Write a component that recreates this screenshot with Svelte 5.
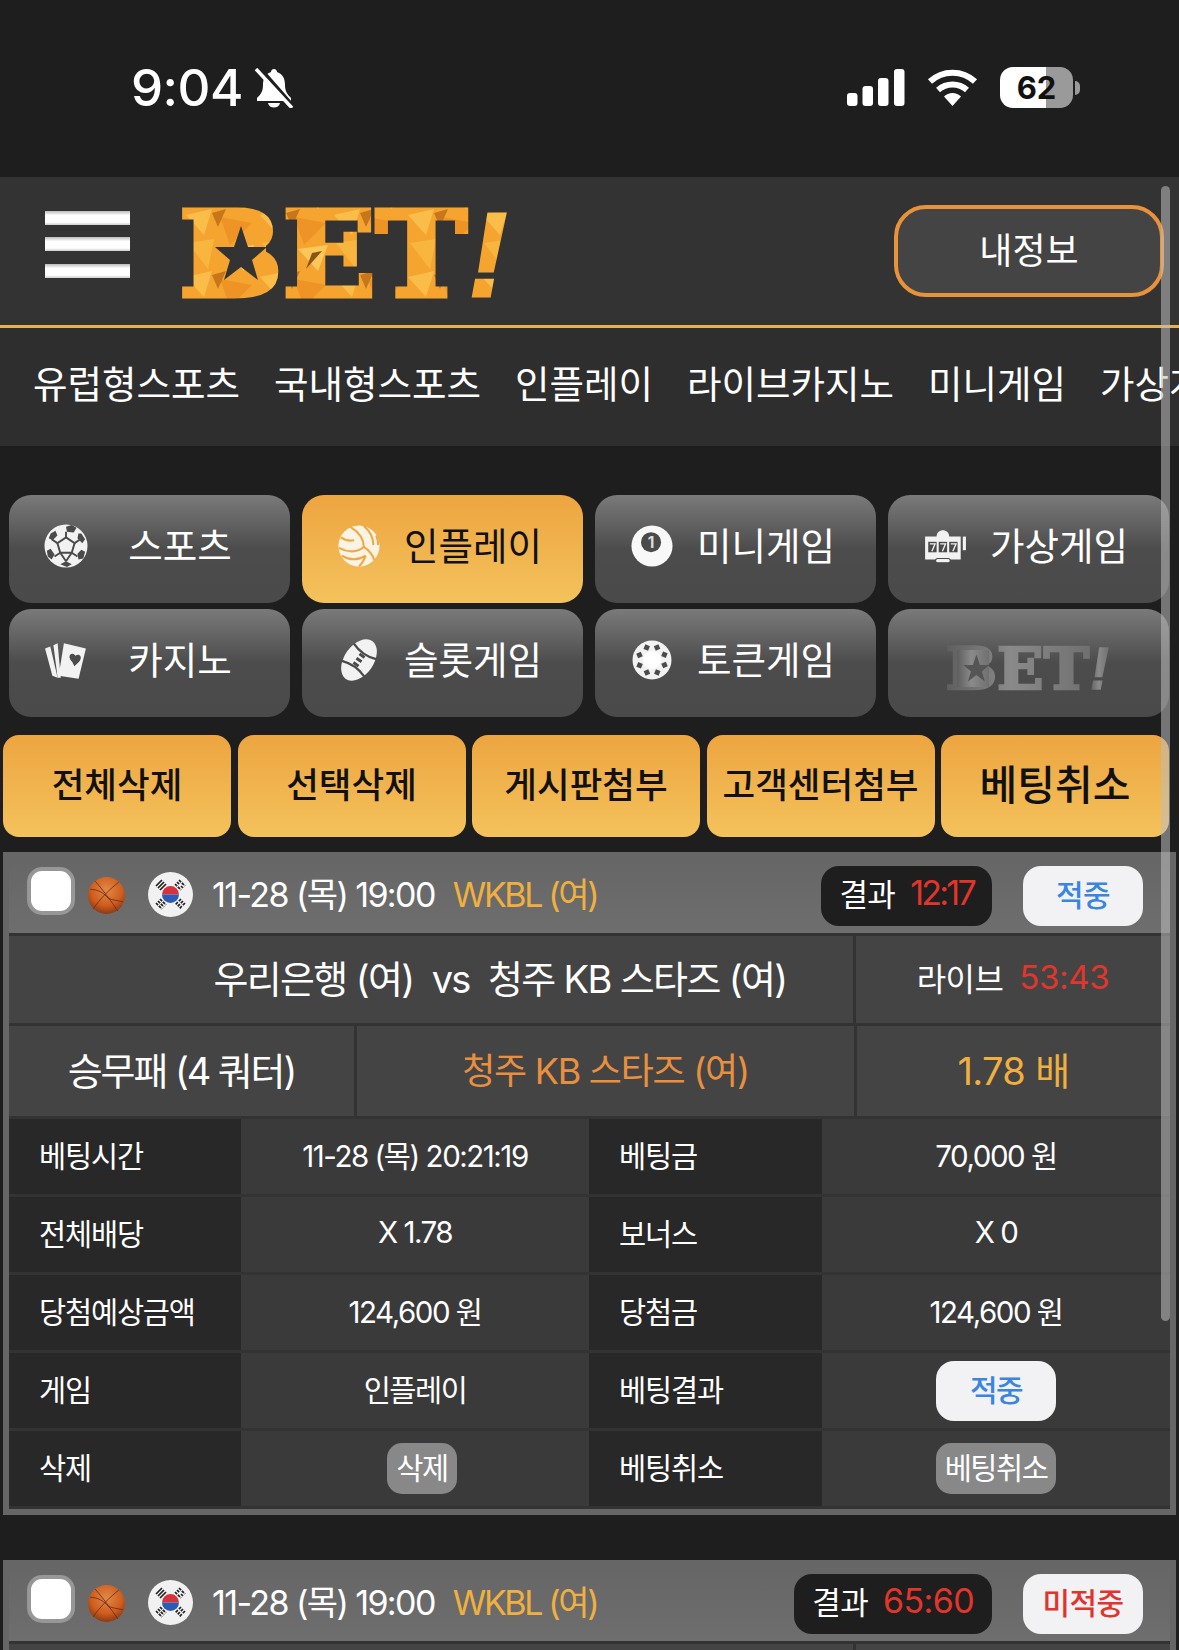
<script lang="ts">
  const navItems = ["유럽형스포츠", "국내형스포츠", "인플레이", "라이브카지노", "미니게임", "가상게임"];
  const cats = [
    { name: "스포츠", icon: "soccer" },
    { name: "인플레이", icon: "volley", active: true },
    { name: "미니게임", icon: "ball" },
    { name: "가상게임", icon: "slot" },
    { name: "카지노", icon: "cards" },
    { name: "슬롯게임", icon: "football" },
    { name: "토큰게임", icon: "chip" },
  ];
  const actions = ["전체삭제", "선택삭제", "게시판첨부", "고객센터첨부", "베팅취소"];
  const details = [
    { a: "베팅시간", b: "11-28 (목) 20:21:19", c: "베팅금", d: "70,000 원" },
    { a: "전체배당", b: "X 1.78", c: "보너스", d: "X 0" },
    { a: "당첨예상금액", b: "124,600 원", c: "당첨금", d: "124,600 원" },
    { a: "게임", b: "인플레이", c: "베팅결과", d: "적중", dKind: "hit" },
    { a: "삭제", b: "삭제", bKind: "del", c: "베팅취소", d: "베팅취소", dKind: "gray" },
  ];
  const cards = [
    { score: "12:17", status: "적중", miss: false, full: true },
    { score: "65:60", status: "미적중", miss: true, full: false },
  ];
</script>

{#snippet logo(fill, star)}
  <text x="-3" y="87" textLength="288" lengthAdjust="spacingAndGlyphs" class="logo-text" fill={fill} stroke={fill}>BET</text>
  <rect x="20" y="8" width="64" height="74" fill={fill} />
  <polygon points="59,17 66,38 85,38 70,51 76,71 59,58 42,71 48,51 33,38 52,38" fill={star} />
  <text x="287" y="87" class="logo-mark" textLength="38" lengthAdjust="spacingAndGlyphs" fill={fill} stroke={fill}>!</text>
{/snippet}

{#snippet flag()}
  <svg class="flag" viewBox="0 0 45 45">
    <circle cx="22.5" cy="22.5" r="22.5" fill="#f1f1f1" />
    <path d="M14 22.5a8.5 8.5 0 0 1 17 0z" fill="#d6333f" />
    <path d="M14 22.5a8.5 8.5 0 0 0 17 0z" fill="#2b5bb5" />
    <g stroke="#222" stroke-width="1.7">
      <path d="M8 14l6-6M10 16l6-6M12 18l6-6" />
      <path d="M31 8l6 6M29 10l2.500 2.500M33 14l2 2M27 12l6 6" stroke-dasharray="3 1" />
      <path d="M8 31l6 6M10 29l6 6M12 27l6 6" stroke-dasharray="3 1" />
      <path d="M37 31l-6 6M35 29l-6 6M33 27l-6 6" stroke-dasharray="3 1.500" />
    </g>
  </svg>
{/snippet}

{#snippet icon(name)}
  {#if name === "soccer"}
    <svg class="ico" viewBox="0 0 46 46">
      <circle cx="23" cy="23" r="22.500" fill="#f2f2f2" />
      <g fill="#4a4a4a">
        <polygon points="23,3 29,1 34,4 31,9 24,8" />
        <polygon points="7,10 12,7 14,12 9,17 5,15" />
        <polygon points="39,10 43,16 40,20 35,15 36,10" />
        <polygon points="3,28 7,26 11,32 8,37 4,34" />
        <polygon points="43,29 41,36 36,37 35,31 39,27" />
        <polygon points="17,42 23,39 29,42 24,45" />
      </g>
      <g fill="none" stroke="#4a4a4a" stroke-width="2">
        <polygon points="23,14 32,20 29,30 17,30 14,20" />
        <path d="M23 14V8M32 20l6-4M29 30l6 4M17 30l-6 4M14 20l-6-4M17 30l6 9M29 30l-6 9" />
      </g>
    </svg>
  {:else if name === "volley"}
    <svg class="ico" viewBox="0 0 44 46">
      <circle cx="22" cy="23" r="21.500" fill="#fbf3e4" />
      <g fill="none" stroke="#efa944" stroke-width="2.200">
        <path d="M13 3c8 5 14 12 14 21M27 2c6 5 10 12 10 20M40 12c2 4 2 7 2 10" />
        <path d="M27 24C20 30 10 30 1 25M29 33c-8 5-17 5-25 0M22 44c3-2 5-6 7-11" />
        <path d="M27 24c5 3 10 9 11 14M3 14c4 3 9 4 14 3" />
      </g>
    </svg>
  {:else if name === "ball"}
    <svg class="ico" viewBox="0 0 44 46">
      <circle cx="22" cy="23" r="21.500" fill="#f8f8f8" />
      <circle cx="21" cy="19" r="10.500" fill="#4a4a4a" />
      <text x="21" y="25" text-anchor="middle" class="ball-num">1</text>
    </svg>
  {:else if name === "slot"}
    <svg class="ico slot" viewBox="0 0 42 34">
      <path d="M2 8h34v22H2zM13 8c0-8 12-8 12 0z" fill="#f2f2f2" />
      <rect x="12" y="29" width="14" height="4" rx="2" fill="#f2f2f2" stroke="#4a4a4a" />
      <path d="M38 8h3v13h-3z" fill="#f2f2f2" />
      <g fill="#4a4a4a">
        <rect x="5" y="13" width="8" height="10" />
        <rect x="15" y="13" width="8" height="10" />
        <rect x="25" y="13" width="8" height="10" />
      </g>
      <path d="M6.500 15h5l-3 7M16.500 15h5l-3 7M26.500 15h5l-3 7" fill="none" stroke="#f2f2f2" stroke-width="1.300" />
    </svg>
  {:else if name === "cards"}
    <svg class="ico" viewBox="0 0 42 38">
      <path d="M1 8l5-2 7 30-5-2z" fill="#f2f2f2" />
      <path d="M9 5l4-2 3 33-3 0z" fill="#f2f2f2" />
      <path d="M19 3l21 5-7 29-19-3z" fill="#f2f2f2" />
      <path d="M27 21c-4-4-3-8 0-8 2 0 2 1 3 2 1-1 2-1 3-1 3 1 3 5-1 8l-3 3z" fill="#4a4a4a" />
    </svg>
  {:else if name === "football"}
    <svg class="ico" viewBox="0 0 40 42">
      <g transform="rotate(35 20 21)">
        <ellipse cx="20" cy="21" rx="14" ry="22" fill="#f2f2f2" />
        <path d="M7 11c8 3 18 3 26 0M7 31c8-3 18-3 26 0" fill="none" stroke="#4a4a4a" stroke-width="2.200" />
        <path d="M17 16h6M17 21h6M17 26h6" stroke="#4a4a4a" stroke-width="2.800" />
      </g>
    </svg>
  {:else if name === "chip"}
    <svg class="ico chip" viewBox="0 0 40 40">
      <circle cx="20" cy="20" r="19.500" fill="#f2f2f2" />
      <g fill="#4a4a4a">
        {#each [0, 45, 90, 135, 180, 225, 270, 315] as a (a)}
          <path d="M20 3l3.500 3.500L20 10l-3.500-3.500z" transform="rotate({a + 22} 20 20)" />
        {/each}
      </g>
      <circle cx="20" cy="20" r="9" fill="#fff" />
    </svg>
  {/if}
{/snippet}

<svg width="0" height="0" class="defs">
  <defs>
    <pattern id="leaf" width="74" height="62" patternUnits="userSpaceOnUse">
      <rect width="74" height="62" fill="#f5a52f" />
      <polygon points="4,6 30,0 22,26" fill="#fbbd4a" />
      <polygon points="38,8 70,14 48,36" fill="#ee9326" />
      <polygon points="6,34 32,30 26,60" fill="#f9b63e" />
      <polygon points="42,40 72,36 62,62" fill="#fcc75a" />
      <polygon points="30,4 44,0 36,18" fill="#c7761a" />
      <polygon points="56,44 66,42 50,60" fill="#8a5416" />
    </pattern>
    <linearGradient id="grey" x1="0" x2="1" y1="0" y2="0">
      <stop offset="0" stop-color="#5e5e5e" />
      <stop offset="0.45" stop-color="#8a8a8a" />
      <stop offset="1" stop-color="#707070" />
    </linearGradient>
  </defs>
</svg>

<div class="page">
  <div class="status">
    <div class="status-left">
      <span class="time">9:04</span>
      <svg class="bell" viewBox="0 0 40 40">
        <path d="M20 1c-2 0-3 1.500-3 3C11 6 9 11 9 17c0 6-2 9-6 13v3h34v-3c-4-4-6-7-6-13 0-6-2-11-8-13 0-1.500-1-3-3-3zM14 35c1 6 11 6 12 0z" fill="#fff" />
        <path d="M5 0l34 39" stroke="#1e1e1e" stroke-width="5" />
        <path d="M2 1l36 39" stroke="#fff" stroke-width="3.500" />
      </svg>
    </div>
    <div class="status-right">
      <svg class="signal" viewBox="0 0 58 37">
        <rect x="0" y="24" width="10.500" height="13" rx="3" fill="#fff" />
        <rect x="15.500" y="17" width="10.500" height="20" rx="3" fill="#fff" />
        <rect x="31" y="9" width="10.500" height="28" rx="3" fill="#fff" />
        <rect x="47" y="0" width="10.500" height="37" rx="3" fill="#fff" />
      </svg>
      <svg class="wifi" viewBox="0 0 51 37">
        <path d="M3 12.500a33 33 0 0 1 45 0M11 21a22 22 0 0 1 29 0" fill="none" stroke="#fff" stroke-width="6" />
        <path d="M25.500 37L17 27.500a12 12 0 0 1 17 0z" fill="#fff" />
      </svg>
      <div class="battery"><span>62</span></div>
      <span class="nub"></span>
    </div>
  </div>

  <header class="top">
    <button class="burger" aria-label="메뉴"><span></span><span></span><span></span></button>
    <svg class="logo" viewBox="0 0 323 90">
      {@render logo("url(#leaf)", "#333")}
    </svg>
    <button class="my"><span>내정보</span></button>
  </header>

  <nav class="nav">
    {#each navItems as item (item)}
      <span>{item}</span>
    {/each}
  </nav>

  <div class="cats">
    {#each cats as cat (cat.name)}
      <button class="cat" class:active={cat.active}>
        {@render icon(cat.icon)}
        <span class="cat-name">{cat.name}</span>
      </button>
    {/each}
    <button class="cat logo-cat" aria-label="BET">
      <svg class="logo-small" viewBox="0 0 323 90">
        {@render logo("url(#grey)", "#555")}
      </svg>
    </button>
  </div>

  <div class="actions">
    {#each actions as action, i (action)}
      <button class="action" class:big={i === 4}><span>{action}</span></button>
    {/each}
  </div>

  {#each cards as card (card.score)}
    <section class="card">
      <div class="card-head">
        <span class="check"></span>
        <span class="bball">
          <svg viewBox="0 0 36 36">
            <defs>
              <radialGradient id="orb-{card.score}" cx="0.5" cy="0.35" r="0.7">
                <stop offset="0" stop-color="#e08a48" />
                <stop offset="0.6" stop-color="#cf5d1e" />
                <stop offset="1" stop-color="#7f3110" />
              </radialGradient>
            </defs>
            <circle cx="18" cy="18" r="18" fill="url(#orb-{card.score})" />
            <path d="M7 4c7 8 16 20 22 29M30 5C22 11 11 22 5 31M2 12c7 0 13 3 18 9M34 24c-6-1-11-2-14-3" fill="none" stroke="#6a2a10" stroke-width="0.800" />
          </svg>
        </span>
        {@render flag()}
        <span class="when up">11-28 (목) 19:00</span>
        <span class="league up">WKBL (여)</span>
        <span class="result"><span class="up">결과</span> <b class="up" class:narrow={!card.miss}>{card.score}</b></span>
        <span class="status-pill" class:miss={card.miss}><span class="up">{card.status}</span></span>
      </div>
      <div class="line one">
        <div class="cell teams">{#if card.full}<span class="up">우리은행 (여) &nbsp;vs&nbsp; 청주 KB 스타즈 (여)</span>{/if}</div>
        <div class="cell live">{#if card.full}<span class="up">라이브</span> <b class="up">53:43</b>{/if}</div>
      </div>
      {#if card.full}
        <div class="line two">
          <div class="cell market"><span class="up">승무패 (4 쿼터)</span></div>
          <div class="cell pick"><span class="up">청주 KB 스타즈 (여)</span></div>
          <div class="cell rate"><span class="up">1.78 배</span></div>
        </div>
        <div class="details">
          {#each details as row (row.a)}
            <div class="label"><span class="up">{row.a}</span></div>
            <div class="value">
              {#if row.bKind}
                <span class="small-btn del"><span class="up">{row.b}</span></span>
              {:else}
                <span class="up">{row.b}</span>
              {/if}
            </div>
            <div class="label"><span class="up">{row.c}</span></div>
            <div class="value">
              {#if row.dKind === "hit"}
                <span class="status-pill"><span class="up">{row.d}</span></span>
              {:else if row.dKind}
                <span class="small-btn"><span class="up">{row.d}</span></span>
              {:else}
                <span class="up">{row.d}</span>
              {/if}
            </div>
          {/each}
        </div>
      {/if}
    </section>
  {/each}

  <div class="scrollbar"></div>
</div>

<style>
  :global(body) {
    background: #1e1e1e;
    overflow: hidden;
  }

  * {
    box-sizing: border-box;
  }

  button {
    border: none;
    padding: 0;
    font: inherit;
    color: inherit;
  }

  .defs {
    position: absolute;
  }

  .page {
    position: relative;
    width: 1179px;
    height: 1650px;
    overflow: hidden;
    background: #1e1e1e;
    color: #fff;
    font-family: Inter, "Noto Sans CJK KR", sans-serif;
  }

  .up {
    display: inline-block;
    margin-bottom: 6px;
  }

  .status {
    height: 177px;
    display: flex;
    justify-content: space-between;
    align-items: flex-start;
    padding: 62px 99px 0 131px;
  }

  .status-left {
    display: flex;
    align-items: center;
    gap: 11px;
  }

  .time {
    font-family: Inter, sans-serif;
    font-size: 51px;
    font-weight: 500;
    line-height: 52px;
    letter-spacing: -0.5px;
  }

  .bell {
    width: 40px;
    height: 40px;
  }

  .status-right {
    display: flex;
    align-items: center;
    gap: 22px;
    padding-top: 5px;
  }

  .signal {
    width: 58px;
    height: 37px;
  }

  .wifi {
    width: 51px;
    height: 37px;
  }

  .battery {
    width: 73px;
    height: 41px;
    border-radius: 13px;
    background: linear-gradient(90deg, #fff 46px, #9a9a9a 46px);
    color: #111;
    display: flex;
    align-items: center;
    justify-content: center;
    font-family: Inter, sans-serif;
    font-size: 31px;
    font-weight: 700;
  }

  .nub {
    width: 5px;
    height: 14px;
    margin-left: -20px;
    border-radius: 0 6px 6px 0;
    background: #9a9a9a;
  }

  .top {
    height: 148px;
    background: #333;
    display: flex;
    align-items: center;
    padding: 0 15px 0 45px;
  }

  .burger {
    width: 85px;
    margin-bottom: 14px;
    display: flex;
    flex-direction: column;
    gap: 12.500px;
    background: none;
  }

  .burger span {
    height: 14px;
    background: linear-gradient(#bbb, #fff 30%, #fff 80%, #ccc);
  }

  .logo {
    width: 323px;
    height: 90px;
    margin-left: 52px;
    margin-top: 5px;
    overflow: visible;
  }

  .logo-text {
    font-family: "DejaVu Serif", serif;
    font-weight: 700;
    font-size: 118px;
    stroke-width: 5px;
  }

  .logo-mark {
    font-family: "Liberation Sans", sans-serif;
    font-style: italic;
    font-weight: 700;
    font-size: 118px;
    stroke-width: 3px;
  }

  .my {
    margin-left: auto;
    width: 270px;
    height: 92px;
    border: 4px solid #e8923a;
    border-radius: 32px;
    background: #444;
    font-size: 36px;
  }

  .my span {
    display: block;
    margin-bottom: 7px;
  }

  .nav {
    height: 121px;
    border-top: 3px solid #e9b24f;
    background: #2e2e2e;
    display: flex;
    align-items: center;
    gap: 34px;
    padding: 0 0 12px 33px;
    font-size: 37.500px;
    white-space: nowrap;
    overflow: hidden;
  }

  .cats {
    margin-top: 49px;
    padding-left: 9px;
    display: grid;
    grid-template-columns: repeat(4, 281px);
    grid-auto-rows: 108px;
    column-gap: 12px;
    row-gap: 6px;
  }

  .cat {
    border-radius: 22px;
    background: linear-gradient(#7a7a7a, #4c4c4c 50%, #4a4a4a);
    display: grid;
    grid-template-columns: 46px 1fr;
    align-items: center;
    justify-items: center;
    padding: 0 19px 6px 34px;
    font-size: 37.500px;
  }

  .cat-name {
    margin-bottom: 6px;
  }

  .cat.active {
    background: linear-gradient(#eda540, #f4c25c);
    color: #111;
  }

  .logo-cat {
    display: flex;
    justify-content: center;
    padding: 0;
  }

  .logo-small {
    width: 161px;
    height: 45px;
    margin: 10px 0 0 -2px;
    overflow: visible;
    filter: blur(0.7px);
  }

  .ico {
    width: 44px;
    height: 44px;
  }

  .chip {
    width: 40px;
    height: 40px;
  }

  .ball-num {
    font-size: 16px;
    font-weight: 700;
    fill: #ddd;
  }

  .actions {
    margin-top: 18px;
    padding: 0 10px 0 3px;
    display: grid;
    grid-template-columns: repeat(5, 1fr);
    gap: 6.500px;
    height: 102px;
  }

  .action {
    border-radius: 16px;
    background: linear-gradient(#eda540, #f4c25c);
    color: #111;
    font-size: 35.500px;
    font-weight: 500;
    white-space: nowrap;
  }

  .action span {
    display: block;
    margin-bottom: 8px;
  }

  .action.big {
    font-size: 41px;
  }

  .card {
    margin: 15px 3px 45px;
    border: 6px solid #666;
    background: #333;
    display: flex;
    flex-direction: column;
    gap: 3px;
    padding-bottom: 3px;
    letter-spacing: -0.04em;
  }

  .card-head {
    height: 75px;
    background: linear-gradient(#666, #6e6e6e);
    display: flex;
    align-items: center;
    padding-left: 18px;
    font-size: 34px;
  }

  .check {
    width: 48px;
    height: 48px;
    margin-bottom: 10px;
    border: 4px solid #979797;
    border-radius: 15px;
    background: #fff;
  }

  .bball {
    width: 37px;
    height: 37px;
    margin-left: 13px;
  }

  .flag {
    width: 45px;
    height: 45px;
    margin: -3px 0 0 23px;
  }

  .when {
    margin-left: 19px;
    letter-spacing: -0.047em;
  }

  .league {
    margin-left: 18px;
    color: #f0b040;
    letter-spacing: -0.07em;
  }

  .result {
    margin-left: auto;
    height: 60px;
    padding: 0 18px;
    border-radius: 18px;
    background: #1e1e1e;
    display: flex;
    align-items: center;
    gap: 15px;
    font-size: 31px;
  }

  .result b,
  .live b {
    font-weight: 400;
    color: #e2352b;
  }

  .result b {
    font-size: 34px;
  }

  .result b.narrow {
    letter-spacing: -0.08em;
  }

  .live b {
    font-size: 33px;
    letter-spacing: -0.01em;
  }

  .status-pill {
    width: 120px;
    height: 60px;
    border-radius: 18px;
    background: #f2f2f4;
    color: #3a85e0;
    display: flex;
    align-items: center;
    justify-content: center;
    font-size: 30px;
    font-weight: 500;
  }

  .card-head .status-pill {
    margin: 0 27px 0 31px;
  }

  .status-pill.miss {
    color: #e0352f;
  }

  .line {
    display: grid;
    gap: 3px;
    font-size: 38px;
  }

  .line.one {
    grid-template-columns: 844px 314px;
    height: 87px;
  }

  .line.two {
    grid-template-columns: 345px 497px 313px;
    height: 90px;
  }

  .cell {
    background: #444;
    display: flex;
    align-items: center;
    justify-content: center;
    white-space: pre-wrap;
  }

  .teams {
    padding-left: 138px;
    letter-spacing: -0.043em;
  }

  .live {
    gap: 16px;
    font-size: 32px;
  }

  .market {
    letter-spacing: -0.055em;
  }

  .pick {
    color: #e89040;
    font-size: 36px;
    letter-spacing: -0.035em;
  }

  .rate {
    color: #f0b040;
  }

  .details {
    display: grid;
    grid-template-columns: 232px 348px 233px 348px;
    grid-auto-rows: 75px;
    row-gap: 3px;
    font-size: 29.500px;
  }

  .label {
    background: #282828;
    display: flex;
    align-items: center;
    padding-left: 30px;
    letter-spacing: -0.04em;
  }

  .value {
    background: #3a3a3a;
    display: flex;
    align-items: center;
    justify-content: center;
    letter-spacing: -0.05em;
  }

  .small-btn {
    height: 51px;
    padding: 0 9px;
    border-radius: 15px;
    background: #888;
    display: flex;
    align-items: center;
  }

  .small-btn.del {
    margin-left: 14px;
  }

  .scrollbar {
    position: absolute;
    left: 1161px;
    top: 186px;
    width: 9px;
    height: 1135px;
    border-radius: 5px;
    background: rgba(190, 190, 190, 0.55);
  }
</style>
